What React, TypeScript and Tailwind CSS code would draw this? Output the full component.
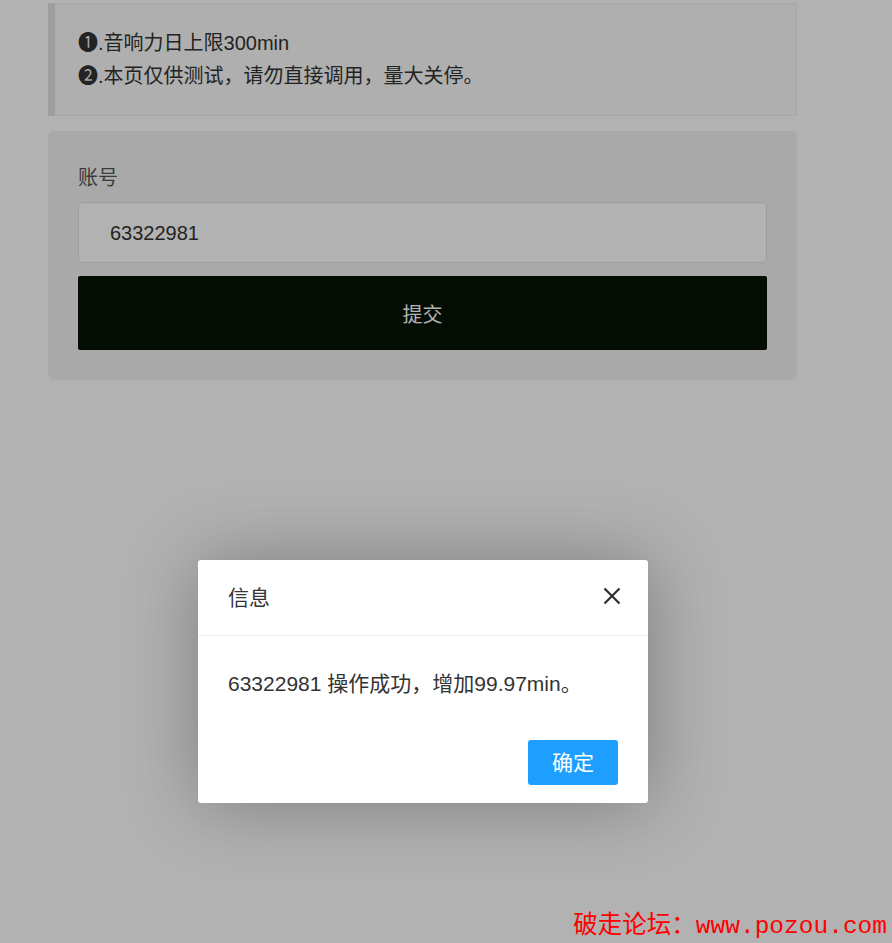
const notices = ["❶.音响力日上限300min", "❷.本页仅供测试，请勿直接调用，量大关停。"];

export default function App() {
  return (
    <div className="relative h-[943px] w-full overflow-hidden bg-white font-['Liberation_Sans','Noto_Sans_CJK_SC',sans-serif] text-[#333]">
      <div className="w-[749px] pt-[3px] ml-[48px]">
        <div className="border border-[#f0f0f0] border-l-[7px] border-l-[#e2e2e2] bg-[#fbfbfb] px-[23px] pt-[23px] pb-[22px] text-[20px] leading-[33px]">
          {notices.map((n) => (
            <p key={n}>{n}</p>
          ))}
        </div>

        <div className="mt-[15px] rounded-[6px] bg-[#f3f3f3] px-[30px] pt-[32px] pb-[30px]">
          <label className="block text-[20px] leading-[30px] text-[#555]">账号</label>
          <div className="mt-[9px] flex h-[61px] items-center rounded-[4px] border border-[#e3e3e3] bg-white pl-[31px] text-[20px] text-[#333]">
            63322981
          </div>
          <button className="mt-[13px] flex h-[74px] w-full items-center justify-center rounded-[2px] bg-[#071407] pt-[4px] text-[20px] text-white">
            提交
          </button>
        </div>
      </div>

      {/* layer shade */}
      <div className="absolute inset-0 bg-black/30" />

      {/* dialog */}
      <div className="absolute left-[198px] top-[560px] w-[450px] rounded-[3px] bg-white shadow-[1px_1px_75px_rgba(0,0,0,0.3)]">
        <div className="relative flex h-[76px] items-center border-b border-[#f0f0f0] pl-[30px] text-[21px] text-[#333]">
          信息
          <svg
            className="absolute right-[27px] top-[27px]"
            width="18"
            height="18"
            viewBox="0 0 18 18"
            fill="none"
            stroke="#2e2e2e"
            strokeWidth="2.2"
          >
            <path d="M1.5 1.5 L16.5 16.5 M16.5 1.5 L1.5 16.5" />
          </svg>
        </div>
        <div className="px-[30px] py-[30px] text-[21px] leading-[36px] text-[#333]">
          63322981 操作成功，增加99.97min。
        </div>
        <div className="flex justify-end px-[30px] pt-[8px] pb-[18px]">
          <button className="flex h-[45px] w-[90px] items-center justify-center rounded-[3px] bg-[#1E9FFF] text-[21px] text-white">
            确定
          </button>
        </div>
      </div>

      {/* watermark */}
      <div className="absolute bottom-[1px] right-[5px] font-['Liberation_Mono','Noto_Sans_CJK_SC',monospace] text-[24.5px] leading-[30px] text-[#ff0000]">
        破走论坛：www.pozou.com
      </div>
    </div>
  );
}
